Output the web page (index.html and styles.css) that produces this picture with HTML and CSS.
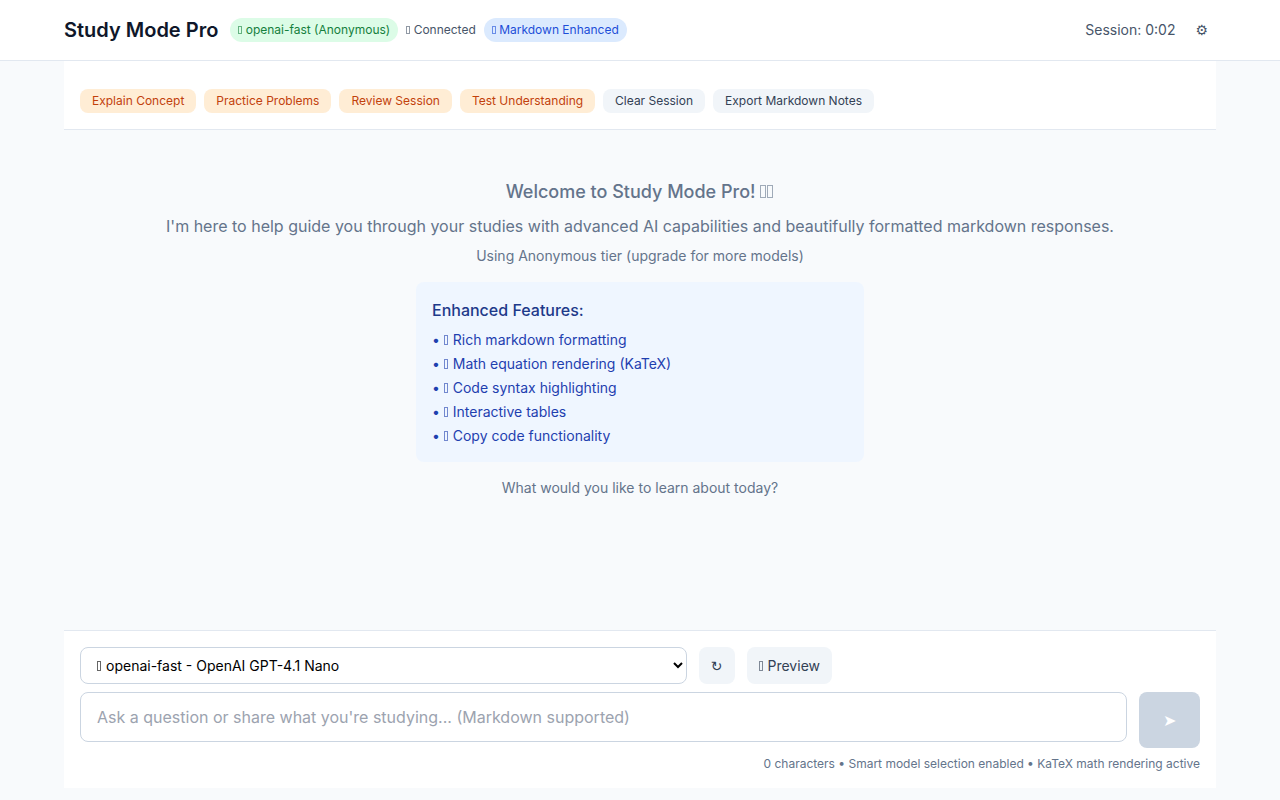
FILE: index.html
```html
<!DOCTYPE html>
<html lang="en">
<head>
    <meta charset="UTF-8">
    <meta name="viewport" content="width=device-width, initial-scale=1.0">
    <title>Study Mode Pro</title>
    <link rel="stylesheet" href="styles.css">
</head>
<body>
    <header class="header">
        <div class="header-inner">
            <div class="brand">
                <h1>Study Mode Pro</h1>
                <div class="badges">
                    <span class="badge badge-model"><i class="glyph"></i> openai-fast (Anonymous)</span>
                    <span class="status"><i class="glyph"></i> Connected</span>
                    <span class="badge badge-markdown"><i class="glyph"></i> Markdown Enhanced</span>
                </div>
            </div>
            <div class="header-right">
                <span class="session">Session: 0:02</span>
                <button type="button" class="settings symbol" aria-label="Settings">⚙</button>
            </div>
        </div>
    </header>

    <div class="container">
        <nav class="toolbar">
            <button type="button" class="chip chip-study">Explain Concept</button>
            <button type="button" class="chip chip-study">Practice Problems</button>
            <button type="button" class="chip chip-study">Review Session</button>
            <button type="button" class="chip chip-study">Test Understanding</button>
            <button type="button" class="chip">Clear Session</button>
            <button type="button" class="chip">Export Markdown Notes</button>
        </nav>

        <main class="chat">
            <div class="welcome">
                <h2>Welcome to Study Mode Pro! <i class="glyph"></i><i class="glyph"></i></h2>
                <p class="intro">I'm here to help guide you through your studies with advanced AI capabilities and beautifully formatted markdown responses.</p>
                <p>Using Anonymous tier (upgrade for more models)</p>
                <section class="features">
                    <h3>Enhanced Features:</h3>
                    <ul>
                        <li>• <i class="glyph"></i> Rich markdown formatting</li>
                        <li>• <i class="glyph"></i> Math equation rendering (KaTeX)</li>
                        <li>• <i class="glyph"></i> Code syntax highlighting</li>
                        <li>• <i class="glyph"></i> Interactive tables</li>
                        <li>• <i class="glyph"></i> Copy code functionality</li>
                    </ul>
                </section>
                <p>What would you like to learn about today?</p>
            </div>
        </main>

        <form class="composer">
            <div class="model-row">
                <div class="model-field">
                    <i class="glyph"></i>
                    <select class="model-select" aria-label="Model">
                        <option>openai-fast - OpenAI GPT-4.1 Nano</option>
                    </select>
                </div>
                <button type="button" class="tool-btn symbol" aria-label="Refresh models">↻</button>
                <button type="button" class="tool-btn"><i class="glyph"></i> Preview</button>
            </div>
            <div class="input-row">
                <textarea class="message" rows="1" aria-label="Message" placeholder="Ask a question or share what you're studying... (Markdown supported)"></textarea>
                <button type="submit" class="send" aria-label="Send" disabled>➤</button>
            </div>
            <p class="hint">0 characters • Smart model selection enabled • KaTeX math rendering active</p>
        </form>
    </div><!-- container -->
</body>
</html>
```
FILE: styles.css
```css
*{margin: 0;padding: 0;box-sizing: border-box;}

body{
    display: flex;
    flex-direction: column;
    min-height: 100vh;
    padding-bottom: 12px;
    background: #f8fafc;
    color: #0f172a;
    font-family: Inter, sans-serif;
    font-size: 14px;
    line-height: 20px;
}

button, select, textarea{
    font: inherit;
}

button{
    border: none;
    cursor: pointer;
}

ul{
    list-style: none;
}

.symbol{
    font-family: "DejaVu Sans", sans-serif;
}

/* small outlined box in front of labels */
.glyph{
    display: inline-block;
    flex: none;
    width: 4px;
    height: 10px;
    margin-right: 1px;
    border: 1px solid currentColor;
    opacity: 0.6;
}

/* header */
.header{
    background: #fff;
    border-bottom: 1px solid #e2e8f0;
}

.header-inner{
    display: flex;
    justify-content: space-between;
    align-items: center;
    max-width: 1152px;
    margin: 0 auto;
    padding: 12px 0;
}

.brand{
    display: flex;
    align-items: center;
    gap: 12px;
}

.brand h1{
    font-size: 20px;
    line-height: 28px;
    font-weight: 600;
}

.badges{
    display: flex;
    align-items: center;
    gap: 8px;
    font-size: 12px;
    line-height: 16px;
}

.badges .glyph{
    height: 8px;
    margin-right: 0;
}

.badge{
    padding: 4px 8px;
    border-radius: 12px;
}

.badge-model{
    background: #dcfce7;
    color: #15803d;
}

.badge-markdown{
    background: #dbeafe;
    color: #1d4ed8;
}

.status{
    color: #475569;
}

.header-right{
    display: flex;
    align-items: center;
    gap: 12px;
    color: #475569;
}

.settings{
    padding: 8px;
    background: none;
    color: #475569;
}

/* page column */
.container{
    display: flex;
    flex-direction: column;
    flex: 1;
    width: 100%;
    max-width: 1152px;
    margin: 0 auto;
}

.toolbar{
    display: flex;
    flex-wrap: wrap;
    gap: 8px;
    padding: 28px 16px 16px;
    background: #fff;
    border-bottom: 1px solid #e2e8f0;
}

.chip{
    padding: 4px 12px;
    border-radius: 8px;
    background: #f1f5f9;
    color: #334155;
    font-size: 12px;
    line-height: 16px;
}

.chip-study{
    background: #ffedd5;
    color: #c2410c;
}

/* welcome */
.chat{
    flex: 1;
    padding: 48px 16px;
}

.welcome{
    color: #64748b;
    text-align: center;
}

.welcome h2{
    margin-bottom: 8px;
    font-size: 18px;
    line-height: 28px;
    font-weight: 500;
}

.welcome h2 .glyph{
    width: 6px;
    height: 13px;
}

.welcome .intro{
    margin-bottom: 8px;
    font-size: 16px;
    line-height: 24px;
}

.features{
    max-width: 448px;
    margin: 16px auto;
    padding: 16px;
    border-radius: 8px;
    background: #eff6ff;
    color: #1e40af;
    text-align: left;
}

.features h3{
    margin-bottom: 8px;
    color: #1e3a8a;
    font-size: 16px;
    line-height: 24px;
    font-weight: 500;
}

.features ul{
    display: grid;
    gap: 4px;
}

/* composer */
.composer{
    padding: 16px;
    background: #fff;
    border-top: 1px solid #e2e8f0;
}

.model-row{
    display: flex;
    gap: 12px;
    max-width: 752px;
    margin-bottom: 8px;
}

.model-field{
    display: flex;
    align-items: center;
    flex: 1;
    min-width: 0;
    padding-left: 16px;
    border: 1px solid #cbd5e1;
    border-radius: 8px;
    background: #fff;
    color: #000;
}

.model-select{
    flex: 1;
    min-width: 0;
    height: 35px;
    border: none;
    border-radius: 8px;
    background: none;
    color: #000;
}

.tool-btn{
    padding: 8px 12px;
    border-radius: 8px;
    background: #f1f5f9;
    color: #334155;
}

.input-row{
    display: flex;
    align-items: flex-start;
    gap: 12px;
    margin-bottom: 8px;
}

.message{
    flex: 1;
    height: 50px;
    padding: 12px 16px;
    border: 1px solid #cbd5e1;
    border-radius: 8px;
    font-size: 16px;
    line-height: 24px;
    resize: none;
}

.message::placeholder{
    color: #9ca3af;
}

.send{
    height: 56px;
    padding: 0 24px;
    border-radius: 8px;
    background: #cbd5e1;
    color: #fff;
    font-size: 16px;
    cursor: not-allowed;
}

.hint{
    color: #64748b;
    font-size: 12px;
    line-height: 16px;
    text-align: right;
}
```
